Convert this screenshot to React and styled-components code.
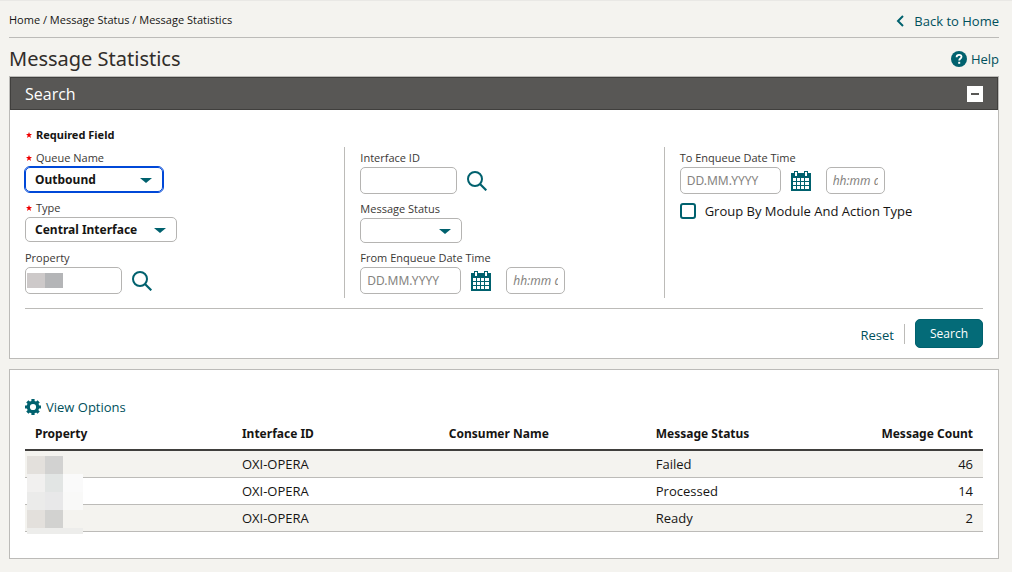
import React, { useState } from 'react';
import styled, { createGlobalStyle } from 'styled-components';

const rows = [
  { id: 1, interfaceId: 'OXI-OPERA', consumer: '', status: 'Failed', count: 46 },
  { id: 2, interfaceId: 'OXI-OPERA', consumer: '', status: 'Processed', count: 14 },
  { id: 3, interfaceId: 'OXI-OPERA', consumer: '', status: 'Ready', count: 2 },
];

const maskColors = [
  '#e3e0dc', '#d2d2d1', '#f4f3ef',
  '#f1f0ef', '#e2e5e4', '#fafafa',
  '#ebebea', '#e8e8e9', '#f9f9f8',
  '#e3e0dc', '#d2d2d0', '#f4f3ef',
];

const SearchIcon = () => (
  <svg width="20" height="20" viewBox="0 0 20 20" fill="none" stroke="#00616e" strokeWidth="2">
    <circle cx="8" cy="8" r="7" />
    <path d="M13 13l6.3 6.3" strokeWidth="2.2" />
  </svg>
);

const CalendarIcon = () => (
  <svg width="20" height="20" viewBox="0 0 20 20" shapeRendering="crispEdges">
    <path d="M0 2h20v18H0z" fill="#00616e" />
    <path d="M3 0h4v5H3zM13 0h4v5h-4z" fill="#00616e" />
    <path d="M4 1h2v4H4zM14 1h2v4h-2z" fill="#fff" />
    <path
      d="M2 7h3v3H2zM6 7h3v3H6zM10 7h3v3h-3zM14 7h4v3h-4zM2 11h3v3H2zM6 11h3v3H6zM10 11h3v3h-3zM14 11h4v3h-4zM2 15h3v3H2zM6 15h3v3H6zM10 15h3v3h-3zM14 15h4v3h-4z"
      fill="#fff"
    />
  </svg>
);

const GearIcon = () => (
  <svg width="16" height="16" viewBox="0 0 16 16" fill="none" stroke="#00616e">
    <circle cx="8" cy="8" r="4.7" strokeWidth="3.2" />
    {[0, 45, 90, 135].map((a) => (
      <path key={a} d="M8 0v2.6M8 13.4V16" strokeWidth="3.2" transform={`rotate(${a} 8 8)`} />
    ))}
  </svg>
);

const HelpIcon = () => (
  <svg width="16" height="16" viewBox="0 0 16 16">
    <circle cx="8" cy="8" r="8" fill="#00616e" />
    <path d="M5.6 6.2c0-1.5 1-2.4 2.5-2.4s2.4.8 2.4 2c0 1.7-2.3 1.7-2.3 3.7" fill="none" stroke="#fff" strokeWidth="1.8" />
    <path d="M7.2 10.8h2v2h-2z" fill="#fff" />
  </svg>
);

const ChevronIcon = () => (
  <svg width="8" height="12" viewBox="0 0 8 12" fill="none" stroke="#00616e" strokeWidth="2">
    <path d="M7 1L2 6l5 5" />
  </svg>
);

const StarIcon = () => (
  <StarSvg width="6" height="6" viewBox="0 0 6 6" aria-hidden="true">
    <path d="M3 0l.8 2H6L4.3 3.5 5 6 3 4.600 1 6l.7-2.500L0 2h2.200z" fill="#f00000" />
  </StarSvg>
);

const Select = ({ id, width, focused, value }) => (
  <SelectBox $width={width}>
    <SelectInput id={id} $focused={focused} defaultValue={value}>
      <option>{value}</option>
    </SelectInput>
    <Arrow width="12" height="5" viewBox="0 0 12 5">
      <path d="M0 0h12L6 5z" fill="#00616e" />
    </Arrow>
  </SelectBox>
);

const DateTime = ({ id, label }) => (
  <Field>
    <Label htmlFor={id}>{label}</Label>
    <Controls>
      <TextInput id={id} $width={101} placeholder="DD.MM.YYYY" />
      <IconButton type="button" aria-label="Open calendar"><CalendarIcon /></IconButton>
      <TimeInput aria-label={`${label} time`} $width={59} placeholder="hh:mm am" />
    </Controls>
  </Field>
);

export default function App() {
  const [open, setOpen] = useState(true);

  return (
    <Page>
      <GlobalStyle />

      {/* Breadcrumbs */}
      <TopBar>
        <Crumbs>
          <a href="#home">Home</a> / <a href="#status">Message Status</a> / <a href="#stats">Message Statistics</a>
        </Crumbs>
        <ActionLink href="#home" $gap={10}><ChevronIcon />Back to Home</ActionLink>
      </TopBar>

      <TitleBar>
        <Title>Message Statistics</Title>
        <ActionLink href="#help" $gap={4}><HelpIcon />Help</ActionLink>
      </TitleBar>

      {/* Search panel */}
      <Panel>
        <PanelHeader>
          <PanelTitle>Search</PanelTitle>
          <Toggle type="button" aria-label="Collapse" onClick={() => setOpen(!open)} />
        </PanelHeader>
        {open && (
          <SearchForm onSubmit={(e) => e.preventDefault()}>
            <RequiredNote><StarIcon />Required Field</RequiredNote>
            <Columns>
              <Column $gap={7}>
                <Field>
                  <Label htmlFor="queue" $strong><StarIcon />Queue Name</Label>
                  <Select id="queue" width={138} value="Outbound" focused />
                </Field>
                <Field>
                  <Label htmlFor="type" $strong><StarIcon />Type</Label>
                  <Select id="type" width={152} value="Central Interface" />
                </Field>
                <Field>
                  <Label htmlFor="property">Property</Label>
                  <Controls>
                    <TextInput id="property" $width={97} />
                    <InputMask />
                    <IconButton type="button" aria-label="Find property"><SearchIcon /></IconButton>
                  </Controls>
                </Field>
              </Column>
              <Column $gap={6}>
                <Field>
                  <Label htmlFor="interface">Interface ID</Label>
                  <Controls>
                    <TextInput id="interface" $width={97} />
                    <IconButton type="button" aria-label="Find interface"><SearchIcon /></IconButton>
                  </Controls>
                </Field>
                <Field>
                  <Label htmlFor="status">Message Status</Label>
                  <Select id="status" width={102} value="" />
                </Field>
                <DateTime id="from" label="From Enqueue Date Time" />
              </Column>
              <Column $gap={6}>
                <DateTime id="to" label="To Enqueue Date Time" />
                <CheckLabel><Checkbox type="checkbox" />Group By Module And Action Type</CheckLabel>
              </Column>
            </Columns>
            <Buttons>
              <ResetButton type="reset">Reset</ResetButton>
              <SearchButton type="submit">Search</SearchButton>
            </Buttons>
          </SearchForm>
        )}
      </Panel>

      {/* Results */}
      <Panel>
        <Results>
          <ActionLink href="#options" $gap={5}><GearIcon />View Options</ActionLink>
          <TableWrapper>
            <Table>
              <thead>
                <tr>
                  <Th>Property</Th>
                  <Th>Interface ID</Th>
                  <Th>Consumer Name</Th>
                  <Th>Message Status</Th>
                  <Th $last>Message Count</Th>
                </tr>
              </thead>
              <tbody>
                {rows.map((row) => (
                  <Row key={row.id}>
                    <Td />
                    <Td>{row.interfaceId}</Td>
                    <Td>{row.consumer}</Td>
                    <Td>{row.status}</Td>
                    <Td $last>{row.count}</Td>
                  </Row>
                ))}
              </tbody>
            </Table>
            <TableMask>
              {maskColors.map((color, i) => <MaskCell key={i} $color={color} />)}
              <MaskFoot />
            </TableMask>
          </TableWrapper>
        </Results>
      </Panel>
    </Page>
  );
}

const GlobalStyle = createGlobalStyle`
  * {
    box-sizing: border-box;
  }
  body {
    margin: 0;
    background: #f4f3ef;
    color: #161513;
    font-family: 'Open Sans', 'Noto Sans', sans-serif;
    font-size: 13px;
  }
  input, select, button {
    font-family: inherit;
    font-size: 13px;
  }
  a {
    color: inherit;
    text-decoration: none;
  }
  svg {
    display: block;
    flex-shrink: 0;
  }
`
const Page = styled.main`
  padding: 0 13px 13px 9px;
  border-top: 1px solid #e9e8e5;
`
const TopBar = styled.header`
  display: flex;
  justify-content: space-between;
  align-items: center;
  height: 37px;
  padding-top: 4px;
  border-bottom: 1px solid #bcbbb8;
`
const Crumbs = styled.nav`
  padding-bottom: 4px;
  font-size: 11px;
`
const ActionLink = styled.a`
  display: inline-flex;
  align-items: center;
  gap: ${(props) => props.$gap}px;
  color: #00505c;
  font-size: 13px;
  line-height: 18px;
`
const TitleBar = styled.div`
  display: flex;
  justify-content: space-between;
  align-items: center;
  height: 38px;
  padding-top: 4px;
`
const Title = styled.h1`
  margin: 0;
  color: #312d2a;
  font-family: 'Noto Sans', sans-serif;
  font-size: 20px;
  font-weight: 400;
  line-height: 28px;
`
const Panel = styled.section`
  margin-bottom: 10px;
  border: 1px solid #bcbbb8;
  background: #fff;
`
const PanelHeader = styled.div`
  display: flex;
  justify-content: space-between;
  align-items: center;
  height: 33px;
  padding: 0 14px;
  border: 1px solid #403f3d;
  background: #585755;
  color: #fff;
`
const PanelTitle = styled.h2`
  margin: 0;
  font-size: 16px;
  font-weight: 400;
`
const Toggle = styled.button`
  display: grid;
  place-items: center;
  width: 16px;
  height: 16px;
  padding: 0;
  border: none;
  background: #fff;

  &::before {
    content: '';
    width: 8px;
    height: 2px;
    background: #585755;
  }
`
const SearchForm = styled.form`
  padding: 17px 15px 10px;
`
const RequiredNote = styled.div`
  display: flex;
  align-items: center;
  margin-bottom: 4px;
  font-family: 'Noto Sans', sans-serif;
  font-size: 11px;
  font-weight: 700;
  line-height: 16px;
`
const StarSvg = styled.svg`
  margin: 0 4px 0 1px;
`
const Columns = styled.div`
  display: grid;
  grid-template-columns: repeat(3, 1fr);
`
const Column = styled.div`
  display: flex;
  flex-direction: column;
  gap: ${(props) => props.$gap}px;
  padding: 2px 0 4px;

  & + & {
    padding-left: 15px;
    border-left: 1px solid #bcbbb8;
  }
`
const Field = styled.div`
  display: flex;
  flex-direction: column;
`
const Label = styled.label`
  display: flex;
  align-items: center;
  color: #3b3835;
  font-size: 11px;
  font-weight: ${(props) => (props.$strong ? 500 : 400)};
  line-height: 18px;
`
const Controls = styled.div`
  position: relative;
  display: flex;
  align-items: center;
`
const TextInput = styled.input`
  width: ${(props) => props.$width}px;
  height: 27px;
  padding: 0 6px;
  border: 1px solid #b5b4b2;
  border-radius: 5px;
  background: #fff;
  font-family: 'Noto Sans', sans-serif;
  font-size: 12px;

  &::placeholder {
    color: #858380;
  }
`
const TimeInput = styled(TextInput)`
  margin-left: 5px;
  font-style: italic;
`
const IconButton = styled.button`
  padding: 0 10px;
  border: none;
  background: none;
`
const SelectBox = styled.div`
  position: relative;
  width: ${(props) => props.$width}px;
`
const SelectInput = styled.select`
  display: block;
  width: 100%;
  height: 25px;
  padding: 0 9px;
  appearance: none;
  border: 1px solid ${(props) => (props.$focused ? '#0048d8' : '#b5b4b2')};
  border-radius: 5px;
  outline: ${(props) => (props.$focused ? '1px solid #0048d8' : 'none')};
  background: #fff;
  color: #161513;
  font-family: 'Noto Sans', sans-serif;
  font-size: 12px;
  font-weight: 700;
`
const Arrow = styled.svg`
  position: absolute;
  top: 11px;
  right: 11px;
  pointer-events: none;
`
const InputMask = styled.span`
  position: absolute;
  top: 6px;
  left: 2px;
  width: 36px;
  height: 15px;
  background: linear-gradient(90deg, #cdc9c9 50%, #b4b5b7 50%);
`
const CheckLabel = styled.label`
  display: flex;
  align-items: center;
  gap: 9px;
  padding-top: 2px;
`
const Checkbox = styled.input`
  width: 16px;
  height: 16px;
  margin: 0;
  appearance: none;
  border: 2px solid #00616e;
  border-radius: 3px;
  background: #fff;
`
const Buttons = styled.div`
  display: flex;
  justify-content: flex-end;
  align-items: center;
  margin-top: 10px;
  padding-top: 10px;
  border-top: 1px solid #bcbbb8;
`
const ResetButton = styled.button`
  height: 20px;
  padding: 2px 10px 0;
  border: none;
  border-right: 1px solid #bcbbb8;
  background: none;
  color: #00505c;
  line-height: 18px;
`
const SearchButton = styled.button`
  min-width: 68px;
  height: 29px;
  margin-left: 10px;
  padding: 0 10px;
  border: 1px solid #00616e;
  border-radius: 5px;
  background: #046b78;
  color: #fff;
  font-size: 12px;
`
const Results = styled.div`
  padding: 28px 15px 26px;
`
const TableWrapper = styled.div`
  position: relative;
`
const Table = styled.table`
  width: 100%;
  table-layout: fixed;
  border-collapse: separate;
  border-spacing: 0;
`
const Th = styled.th`
  width: ${(props) => (props.$last ? 'auto' : '21.6%')};
  height: 32px;
  padding: 0 10px 2px;
  border-bottom: 2px solid #403f3d;
  text-align: ${(props) => (props.$last ? 'right' : 'left')};
  font-family: 'Noto Sans', sans-serif;
  font-size: 12px;
  font-weight: 700;
`
const Row = styled.tr`
  &:nth-child(odd) {
    background: #f4f3ef;
  }
`
const Td = styled.td`
  height: 27px;
  padding: 0 10px;
  border-bottom: 1px solid #bcbbb8;
  text-align: ${(props) => (props.$last ? 'right' : 'left')};
`
const TableMask = styled.div`
  position: absolute;
  top: 37px;
  left: 2px;
  display: grid;
  grid-template-columns: 18px 18px 20px;
  grid-auto-rows: 18px;
`
const MaskCell = styled.span`
  background: ${(props) => props.$color};
`
const MaskFoot = styled.span`
  grid-column: 1 / -1;
  height: 6px;
  background: #ededeb;
`
